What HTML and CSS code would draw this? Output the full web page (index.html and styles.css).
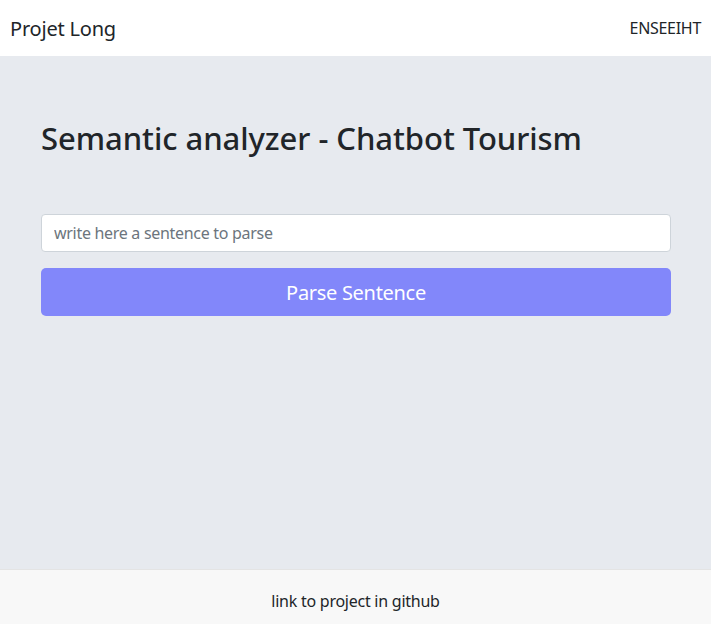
FILE: index.html
```html
<!DOCTYPE html>
<html lang="en">
<head>
<meta charset="utf-8">
<title>Projet Long</title>
<link rel="stylesheet" href="styles.css">
</head>
<body>
<div class="page">
  <header class="navbar">
    <span class="brand">Projet Long</span>
    <span class="nav-link">ENSEEIHT</span>
  </header>
  <main class="main">
    <div class="container">
      <h1 class="title">Semantic analyzer - Chatbot Tourism</h1>
      <form class="form">
        <input class="input" type="text" placeholder="write here a sentence to parse">
        <button class="btn" type="button">Parse Sentence</button>
      </form>
    </div>
  </main>
  <footer class="footer">
    <span>link to project in github</span>
  </footer>
</div>
</body>
</html>
```

FILE: styles.css
```css
* { box-sizing: border-box; }
html, body { margin: 0; padding: 0; height: 100%; }
body {
  font-family: "Noto Sans", "Open Sans", sans-serif;
  color: #212529;
  background: #ffffff;
}
.page {
  display: flex;
  flex-direction: column;
  height: 624px;
}
.navbar {
  height: 56px;
  flex: none;
  display: flex;
  align-items: center;
  justify-content: space-between;
  padding: 0 10px;
  background: #ffffff;
}
.brand {
  font-size: 20px;
  color: #212529;
  letter-spacing: -0.2px;
}
.nav-link {
  font-size: 16px;
  color: #212529;
  letter-spacing: -0.3px;
}
.main {
  flex: 1;
  background: #e7eaef;
}
.container {
  padding: 62px 40px 0 41px;
}
.title {
  margin: 0;
  font-size: 31px;
  font-weight: 500;
  line-height: 40px;
  letter-spacing: -0.05px;
  color: #212529;
}
.form {
  margin-top: 56px;
  display: flex;
  flex-direction: column;
  gap: 16px;
}
.input {
  height: 38px;
  width: 100%;
  border: 1px solid #ced4da;
  border-radius: 4px;
  background: #fff;
  padding: 0 12px;
  font-family: inherit;
  font-size: 16px;
  color: #495057;
  outline: none;
}
.input::placeholder { color: #6c757d; letter-spacing: -0.3px; }
.btn {
  height: 48px;
  width: 100%;
  border: none;
  border-radius: 5px;
  background: #8287fa;
  color: #ffffff;
  font-family: inherit;
  font-size: 20px;
  letter-spacing: -0.3px;
}
.footer {
  height: 55px;
  flex: none;
  background: #f8f8f8;
  border-top: 1px solid #e4e4e4;
  display: flex;
  align-items: center;
  justify-content: center;
  padding-top: 8px;
  font-size: 16px;
  letter-spacing: -0.25px;
  color: #212529;
}
```
